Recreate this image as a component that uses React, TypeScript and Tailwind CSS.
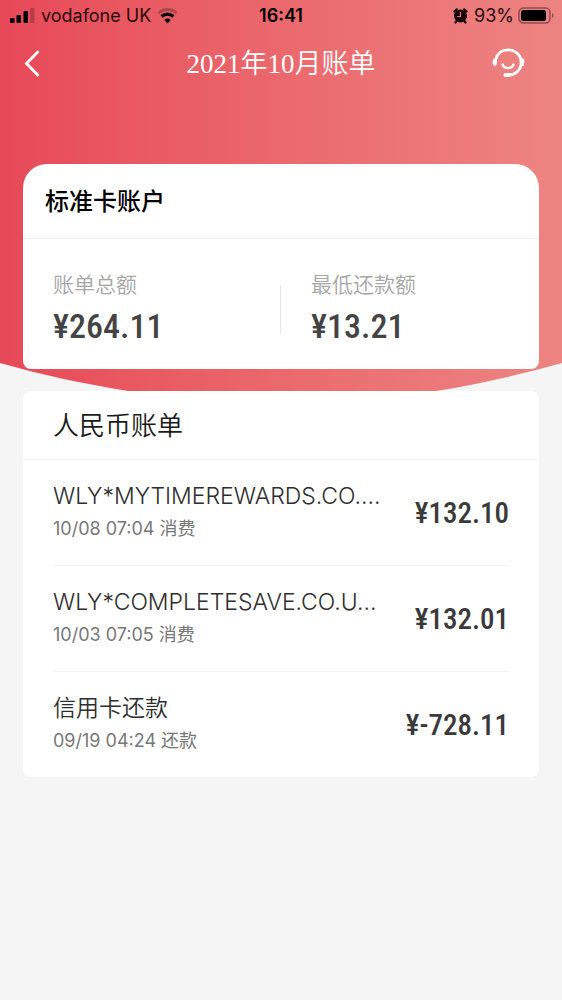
type Entry = { name: string; time: string; amount: string };

const entries: Entry[] = [
  { name: "WLY*MYTIMEREWARDS.CO....", time: "10/08 07:04 消费", amount: "¥132.10" },
  { name: "WLY*COMPLETESAVE.CO.U...", time: "10/03 07:05 消费", amount: "¥132.01" },
  { name: "信用卡还款", time: "09/19 04:24 还款", amount: "¥-728.11" },
];

const AMOUNT_FONT = "font-['Roboto_Condensed','Liberation_Sans_Narrow',Roboto,sans-serif]";

function StatusBar() {
  return (
    <div className="grid h-8 grid-cols-[1fr_auto_1fr] items-center px-2 text-lg leading-8 text-[#2a0c10]">
      <div className="flex items-center gap-1.5">
        <svg width="27" height="16" viewBox="0 0 27 16" aria-hidden="true">
          <rect x="2" y="10" width="4.500" height="5" rx="1" fill="#000" />
          <rect x="8.500" y="7" width="4.500" height="8" rx="1" fill="#000" />
          <rect x="15.500" y="3" width="4.500" height="12" rx="1" fill="#000" />
          <rect x="22" y="0" width="4.500" height="15" rx="1" fill="#000" opacity="0.2" />
        </svg>
        <span className="whitespace-nowrap">vodafone UK</span>
        <svg width="21" height="16" viewBox="0 0 21 16" fill="none" aria-hidden="true">
          <path d="M1.500 5.200C6.500 .3 14.500 .3 19.500 5.200" stroke="#000" strokeOpacity="0.25" strokeWidth="3" />
          <path d="M4.600 8.500C8 5.300 13 5.300 16.400 8.500" stroke="#000" strokeWidth="3.200" />
          <path d="M7.300 12C9.200 10 11.800 10 13.700 12L10.500 15.500Z" fill="#000" />
        </svg>
      </div>
      <time className="font-semibold text-black">16:41</time>
      <div className="flex items-center justify-end gap-1">
        <svg width="15" height="16" viewBox="0 0 15 16" aria-hidden="true">
          <circle cx="7.500" cy="8" r="6.500" fill="#160507" />
          <path d="M1.500 3.500L3.800 1.300M13.500 3.500L11.200 1.300M3.500 13.200L2.500 14.500M11.500 13.200L12.500 14.500" stroke="#160507" strokeWidth="2.200" strokeLinecap="round" />
          <path d="M7.500 4v4.500H4.200" fill="none" stroke="#ec7b7e" strokeWidth="1.200" />
        </svg>
        <span className="pl-0.5">93%</span>
        <svg width="36" height="18" viewBox="0 0 36 18" aria-hidden="true">
          <rect x="1" y="1" width="31" height="15" rx="4.500" fill="none" stroke="#000" strokeOpacity="0.4" strokeWidth="1.500" />
          <rect x="3" y="3" width="25" height="11" rx="2.500" fill="#000" />
          <path d="M34 6c2 .8 2 4.200 0 5z" fill="#000" opacity="0.4" />
        </svg>
      </div>
    </div>
  );
}

function NavBar() {
  return (
    <header className="grid h-16 grid-cols-[1fr_auto_1fr] items-center pr-9 pl-5 text-white">
      <button type="button" aria-label="返回" className="justify-self-start pb-0.5">
        <svg width="24" height="28" viewBox="0 0 24 28" fill="none" stroke="currentColor" strokeWidth="2.800" strokeLinecap="round" strokeLinejoin="miter">
          <path d="M17.800 3L6.500 14.500L17.800 26" />
        </svg>
      </button>
      <h1 className="pl-4 text-[27px] leading-8 font-[350] font-['Liberation_Serif','Noto_Sans_CJK_SC',serif]">2021年10月账单</h1>
      <button type="button" aria-label="客服" className="justify-self-end pb-0.5">
        <svg width="34" height="30" viewBox="0 0 34 30" fill="none" stroke="currentColor" strokeLinecap="round">
          <path d="M3.500 12C5 5.500 10 1.800 16 1.800C23.500 1.800 29.200 7.500 29.200 14.500C29.200 21.500 24 27 15 27.200" strokeWidth="2.800" />
          <path d="M2.800 12.900V15.700" strokeWidth="4.200" />
          <path d="M30 12.500V16" strokeWidth="4.400" />
          <path d="M13.500 27H17" strokeWidth="4.200" />
          <path d="M10.500 16.500C12.500 21.300 19.500 21.300 21.500 16.500" strokeWidth="2.400" />
        </svg>
      </button>
    </header>
  );
}

function Total({ label, amount }: { label: string; amount: string }) {
  return (
    <div>
      <dt className="text-[21px] leading-8 font-[350] text-[#a6a6a6]">{label}</dt>
      <dd className={`text-[34px] leading-[50px] font-medium text-[#444] ${AMOUNT_FONT}`}>{amount}</dd>
    </div>
  );
}

export default function App() {
  return (
    <div className="min-h-screen bg-[#f5f5f5] font-[Inter,'Noto_Sans_CJK_SC',sans-serif]">
      <div className="relative bg-linear-to-r from-[#e74857] to-[#ed8482] pb-[22px]">
        <svg className="absolute bottom-0 left-0 h-7 w-full" viewBox="0 0 562 28" preserveAspectRatio="none" aria-hidden="true">
          <path d="M0 0C42 12 85 21 128 28H0ZM562 0C520 12 478 21 436 28H562Z" fill="#f5f5f5" />
        </svg>
        <StatusBar />
        <NavBar />
        <section className="relative mx-[23px] mt-[68px] rounded-t-3xl rounded-b-lg bg-white">
          <h2 className="border-b border-[#f0f0f0] px-[22px] pt-[22px] pb-5 text-2xl leading-8 font-medium text-black">标准卡账户</h2>
          <dl className="grid grid-cols-2 pt-[30px] pb-[18px]">
            <div className="relative pl-[30px]">
              <Total label="账单总额" amount="¥264.11" />
              <span className="absolute top-4 right-0 h-12 w-px bg-[#e6e6e6]" />
            </div>
            <div className="pl-[30px]">
              <Total label="最低还款额" amount="¥13.21" />
            </div>
          </dl>
        </section>
      </div>
      <section className="mx-[23px] rounded-lg bg-white">
        <h2 className="border-b border-[#f0f0f0] px-[30px] pt-[17px] pb-[15px] text-[26px] leading-9 font-[350] text-[#1a1a1a]">人民币账单</h2>
        <ul className="px-[30px]">
          {entries.map((entry) => (
            <li key={entry.time} className="flex items-center justify-between border-b border-[#f2f2f2] pt-5 pb-[21px] last:border-b-0">
              <div>
                <p className="text-[23px] leading-8 font-[350] text-[#2e2e2e]">{entry.name}</p>
                <p className="pt-0.5 text-lg leading-[30px] text-[#777]">{entry.time}</p>
              </div>
              <p className={`shrink-0 pt-0.5 text-[29px] leading-9 font-medium text-[#3a3a3a] ${AMOUNT_FONT}`}>{entry.amount}</p>
            </li>
          ))}
        </ul>
      </section>
    </div>
  );
}
